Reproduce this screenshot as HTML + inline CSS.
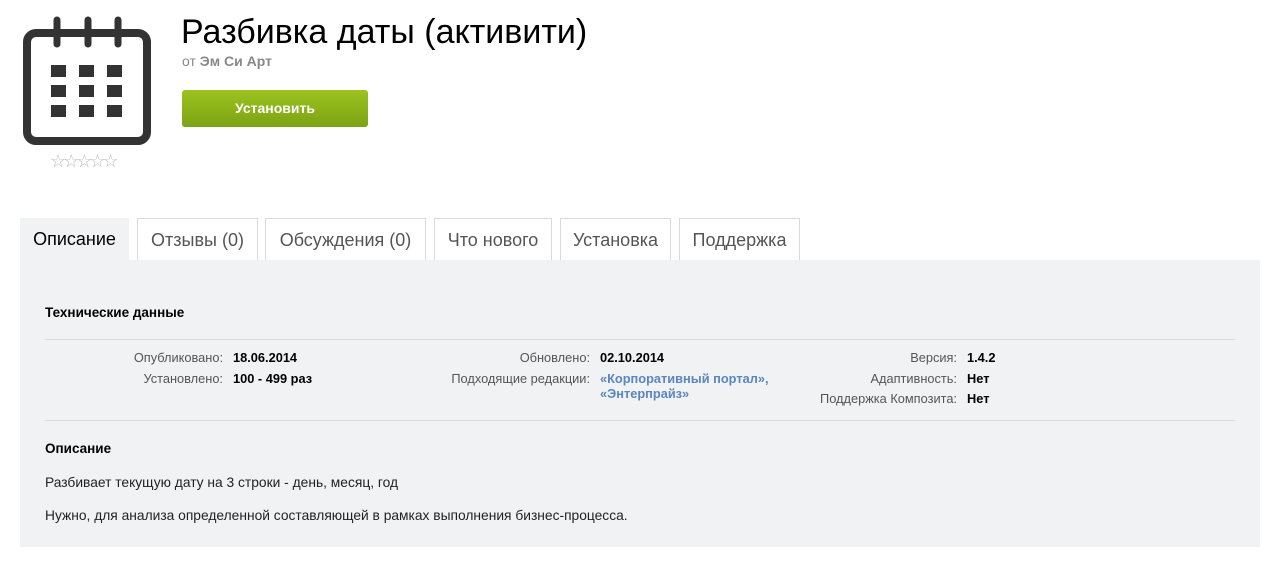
<!DOCTYPE html>
<html><head><meta charset="utf-8"><style>
body{margin:0;background:#fff;font-family:"Liberation Sans",Arial,sans-serif;width:1275px;height:563px;position:relative;overflow:hidden}
.a{position:absolute}
.tab{position:absolute;top:218px;height:42px;border:1px solid #d9d9d9;border-bottom:none;background:#fff;font-size:18px;color:#555;line-height:42px;text-align:center;box-sizing:border-box}
.lbl{font-size:12.8px;color:#555;text-align:right}
.val{font-size:12.8px;color:#000;font-weight:bold}
</style></head><body>
<svg class="a" style="left:0;top:0" width="180" height="180">
<rect x="27" y="33" width="120" height="108" rx="9" fill="none" stroke="#333" stroke-width="8"/>
<g stroke="#333" stroke-width="7" stroke-linecap="round"><line x1="57" y1="20" x2="57" y2="44"/><line x1="88" y1="20" x2="88" y2="44"/><line x1="118" y1="20" x2="118" y2="44"/></g>
<g fill="#333">
<rect x="51" y="65" width="15" height="12"/><rect x="79" y="65" width="15" height="12"/><rect x="107" y="65" width="15" height="12"/>
<rect x="51" y="85" width="15" height="12"/><rect x="79" y="85" width="15" height="12"/><rect x="107" y="85" width="15" height="12"/>
<rect x="51" y="105" width="15" height="12"/><rect x="79" y="105" width="15" height="12"/><rect x="107" y="105" width="15" height="12"/>
</g></svg>
<div class="a" style="left:50px;top:151px;font-size:18px;color:#bbb;letter-spacing:-3px">☆☆☆☆☆</div>
<div class="a" style="left:181px;top:13px;font-size:34px;color:#000">Разбивка даты (активити)</div>
<div class="a" style="left:182px;top:53px;font-size:14px;color:#888">от <b>Эм Си Арт</b></div>
<div class="a" style="left:182px;top:90px;width:186px;height:37px;border-radius:3px;background:linear-gradient(#9cc31f,#7ca313);color:#fff;font-weight:bold;font-size:14px;text-align:center;line-height:37px">Установить</div>
<div class="tab" style="left:20px;width:109px;background:#f1f2f4;border:none;color:#000">Описание</div>
<div class="tab" style="left:137px;width:121px">Отзывы (0)</div>
<div class="tab" style="left:265px;width:161px">Обсуждения (0)</div>
<div class="tab" style="left:434px;width:118px">Что нового</div>
<div class="tab" style="left:560px;width:111px">Установка</div>
<div class="tab" style="left:679px;width:121px">Поддержка</div>
<div class="a" style="left:20px;top:260px;width:1240px;height:287px;background:#f1f2f4"></div>
<div class="a" style="left:45px;top:305px;font-size:13.5px;font-weight:bold">Технические данные</div>
<div class="a" style="left:45px;top:339px;width:1190px;height:1px;background:#dcdcdc"></div>
<div class="a lbl" style="left:60px;top:350px;width:163px">Опубликовано:</div><div class="a val" style="left:233px;top:350px">18.06.2014</div>
<div class="a lbl" style="left:60px;top:371px;width:163px">Установлено:</div><div class="a val" style="left:233px;top:371px">100 - 499 раз</div>
<div class="a lbl" style="left:400px;top:350px;width:190px">Обновлено:</div><div class="a val" style="left:600px;top:350px">02.10.2014</div>
<div class="a lbl" style="left:400px;top:371px;width:190px">Подходящие редакции:</div><div class="a val" style="left:600px;top:371px;color:#5a86c1;line-height:15px">«Корпоративный портал»,<br>«Энтерпрайз»</div>
<div class="a lbl" style="left:760px;top:350px;width:197px">Версия:</div><div class="a val" style="left:967px;top:350px">1.4.2</div>
<div class="a lbl" style="left:760px;top:371px;width:197px">Адаптивность:</div><div class="a val" style="left:967px;top:371px">Нет</div>
<div class="a lbl" style="left:760px;top:391px;width:197px">Поддержка Композита:</div><div class="a val" style="left:967px;top:391px">Нет</div>
<div class="a" style="left:45px;top:420px;width:1190px;height:1px;background:#dcdcdc"></div>
<div class="a" style="left:45px;top:441px;font-size:13.5px;font-weight:bold">Описание</div>
<div class="a" style="left:45px;top:475px;font-size:13.8px;color:#222">Разбивает текущую дату на 3 строки - день, месяц, год</div>
<div class="a" style="left:45px;top:508px;font-size:13.8px;color:#222">Нужно, для анализа определенной составляющей в рамках выполнения бизнес-процесса.</div>
</body></html>
